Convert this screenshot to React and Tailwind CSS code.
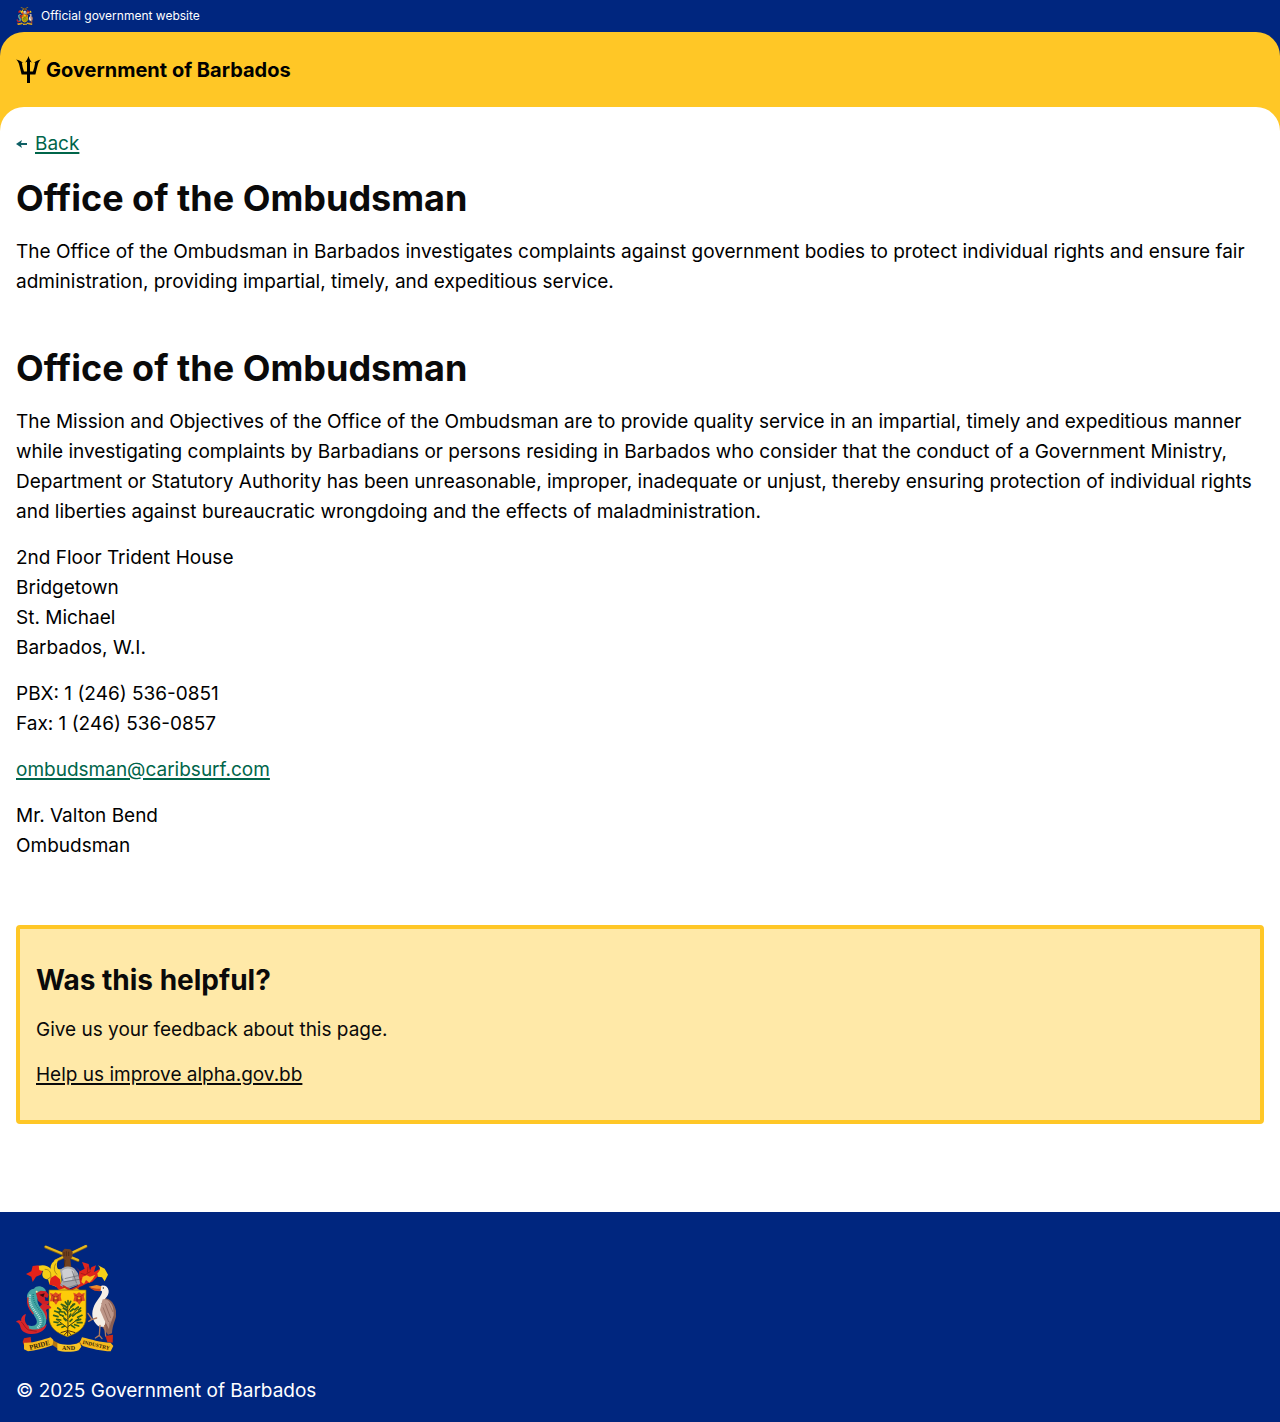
import React from "react";

function CoatOfArms({ className }) {
  return (
    <svg className={className} viewBox="18 24 300 324" role="img" aria-label="Coat of arms of Barbados">
      {/* crossed sugar canes held by a fist */}
      <g strokeLinecap="round" fill="none">
        <path d="M107 33L204 73" stroke="#8a6412" strokeWidth="9" />
        <path d="M228 31L136 75" stroke="#8a6412" strokeWidth="9" />
        <path d="M107 32L204 72" stroke="#e5b81f" strokeWidth="6" />
        <path d="M228 30L136 74" stroke="#e5b81f" strokeWidth="6" />
      </g>
      <path d="M157 46L164 38L181 40L188 48L187 62L181 70L184 94L162 94L163 70L157 60Z" fill="#70401f" />
      <path d="M162 48V60M169 46V61M176 47V60M165 72L163 90" stroke="#3c200f" strokeWidth="2" fill="none" />

      {/* mantling, left */}
      <path d="M152 98C142 104 137 92 144 72C132 72 120 84 122 98C112 86 92 84 76 94L84 106L100 104C92 118 100 130 114 130L118 144L142 154L156 150Z" fill="#f7cf17" />
      <path d="M86 88L68 90L64 106L48 114L64 122L68 138L78 122L92 116L98 106L88 102Z" fill="#e32219" />
      <path d="M122 126L136 118L150 130L154 150L168 158L154 170L136 150L118 146Z" fill="#e32219" />
      <path d="M104 100C116 100 124 106 122 122M138 82C130 94 132 108 142 116M112 130L124 122" stroke="#8d6a12" strokeWidth="2" fill="none" />
      {/* mantling, right */}
      <path d="M196 92L208 106L206 124L194 128L206 142L200 156L216 150L232 142L246 138L262 122L280 112L268 100L252 108L258 88L244 94L240 104L236 84L216 78L224 98L210 106Z" fill="#df251c" />
      <path d="M262 112C272 102 272 96 264 88L284 98L294 116L284 136L276 124L264 122Z" fill="#f7cf17" />
      <path d="M218 122L230 118L240 122L256 116L248 130L238 140L228 132L222 144L214 138Z" fill="#f7b91a" />
      <path d="M212 112L226 116L242 106M202 134L214 128M234 92L232 110" stroke="#8a1712" strokeWidth="2" fill="none" />

      {/* helmet */}
      <path d="M150 104C156 92 180 86 194 98L204 112L211 144L190 152L172 160L150 148L158 132Z" fill="#a9a9ad" />
      <path d="M156 105C168 94 184 96 192 106L186 132L162 136Z" fill="#cfcfd3" />
      <path d="M164 128L208 118M160 138L208 130M186 104L200 142M154 146L170 156L204 145" stroke="#66666c" strokeWidth="2" fill="none" />
      <path d="M160 147L182 160L204 149L208 156L184 168L158 156Z" fill="#cf2a1d" />
      <path d="M145 162L164 156L180 166L199 157L209 162L180 176Z" fill="#f2c51b" />

      {/* shield */}
      <path d="M117 162H228V244C228 274 204 292 172 302C140 292 117 274 117 244Z" fill="#fdcb09" stroke="#8b6a0b" strokeWidth="2" />
      <g fill="#dd4a20">
        <path d="M120 170L130 174L137 169L145 174L154 170L152 182L155 194L145 195L138 206L130 196L120 196L123 183Z" />
        <path d="M190 170L200 174L207 169L215 174L224 170L222 182L225 194L215 195L208 206L200 196L190 196L193 183Z" />
      </g>
      <g fill="none" stroke="#8a220f" strokeWidth="2">
        <path d="M126 178L137 184L148 178M129 192L145 192M131 184V198M144 184V196" />
        <path d="M196 178L207 184L218 178M199 192L215 192M201 184V198M214 184V196" />
      </g>
      <circle cx="137" cy="187" r="3" fill="#f6c71b" />
      <circle cx="207" cy="187" r="3" fill="#f6c71b" />
      {/* bearded fig tree */}
      <path d="M174 202C171 228 176 260 173 288M173 276L142 252M174 272L208 246M173 254L142 228M174 248L204 218M174 230L156 208M175 226L190 202" stroke="#3c3a16" strokeWidth="3" fill="none" />
      <path d="M173 284L152 290M173 286L162 298M174 286L184 298M175 284L196 290M173 282V300" stroke="#4a2b10" strokeWidth="3" fill="none" />
      <g stroke="#2f5f1c" strokeWidth="5" strokeLinecap="round" fill="none">
        <path d="M166 198L172 206M182 196L177 206M154 205L166 211M194 204L183 213M160 217L170 222M190 219L181 226M143 216L152 222M205 213L194 221M174 194V200" />
        <path d="M134 225L148 230M212 224L200 231M150 236L160 240M198 232L188 240M131 238L144 242M216 238L203 244M140 250L152 252M212 250L198 254M162 228L168 236M182 234L178 242" />
        <path d="M132 258L144 260M216 260L202 260M142 268L154 264M206 270L194 266M162 248L168 254M186 250L180 256M156 274L164 270M194 275L184 268M168 216L172 212M148 226L158 228M206 222L212 216" />
      </g>

      {/* dolphin */}
      <path d="M104 196C108 208 122 208 124 216C116 220 110 216 108 224C114 232 110 244 112 252L98 240L88 214Z" fill="#d5242a" />
      <path d="M52 192C46 172 62 158 72 158C82 144 106 152 108 166L100 176L86 182C78 192 84 206 94 218C110 236 114 258 102 274C90 290 64 290 48 282L54 268C74 274 86 264 78 248C70 232 54 216 52 192Z" fill="#45a5a4" />
      <path d="M60 176C56 200 66 214 80 232C94 250 96 264 82 276" stroke="#b5dfda" strokeWidth="7" strokeDasharray="3 3" fill="none" />
      <path d="M70 174C68 196 80 210 92 226C104 244 104 262 92 276" stroke="#1f7f86" strokeWidth="5" strokeDasharray="3 3" fill="none" />
      <path d="M78 172L92 164L108 166L116 176L112 186L104 182L106 194L118 196L114 204L96 204L84 194Z" fill="#cd1f26" />
      <path d="M88 176L104 172L100 184Z" fill="#3a0d12" />
      <circle cx="80" cy="167" r="3" fill="#f4e2a0" />
      <path d="M54 184C50 202 58 220 70 234" stroke="#d5242a" strokeWidth="4" fill="none" />
      <path d="M56 270C44 262 42 250 48 234C36 238 32 248 34 256C28 250 22 252 18 258C28 260 30 268 32 276C38 292 62 298 82 292C98 286 108 278 110 264C96 280 76 284 58 278Z" fill="#d5242a" />
      <path d="M34 258C42 264 44 276 56 282L80 286" stroke="#811519" strokeWidth="2" fill="none" />

      {/* pelican */}
      <path d="M274 188C300 180 318 206 319 234C319 250 308 262 306 292L294 296L276 272L256 244L262 206Z" fill="#8c5f53" />
      <path d="M268 154C276 144 294 148 296 164C298 182 278 190 274 204L286 204C298 218 288 244 284 272L268 272C250 262 242 238 250 216C256 196 278 178 276 166L268 162Z" fill="#f5eee6" />
      <path d="M278 190C302 188 313 212 311 238L302 262L297 280L282 250L270 222Z" fill="#bd9688" />
      <path d="M286 204L302 246M296 200L309 228M279 214L296 258M300 256L298 286" stroke="#8a6055" strokeWidth="2" fill="none" />
      <path d="M236 152L260 147L274 151L272 164L252 160Z" fill="#ef8a2c" />
      <path d="M236 154L260 158L272 158L270 166L254 164Z" fill="#c9451f" />
      <circle cx="280" cy="156" r="2" fill="#181818" />
      <path d="M260 246L246 250L234 232M246 250L236 256M246 250L240 240M270 268L268 298L256 306M268 298L276 308M284 268L287 300L296 308" stroke="#b07a5c" strokeWidth="4" fill="none" strokeLinecap="round" strokeLinejoin="round" />

      {/* scroll */}
      <path d="M42 307L62 303L64 320L50 324L42 328L38 318Z" fill="#c92c19" />
      <path d="M286 300L309 296L308 320L292 318Z" fill="#c92c19" />
      <path d="M126 312L146 322V340L128 328ZM218 312L202 322V336L216 326Z" fill="#b37510" />
      <path d="M42 320C72 322 96 312 122 304L130 312L128 328C100 338 76 344 54 346L42 340Z" fill="#f6b91d" />
      <path d="M216 304C244 310 270 320 302 320L310 330L302 346C276 346 244 338 218 330L210 318Z" fill="#f6b91d" />
      <path d="M142 322C162 328 186 328 208 320L214 332L206 343C188 349 160 349 142 343Z" fill="#f8c626" />
      <g fill="#2f2108" fontFamily="Liberation Serif, serif" fontWeight="700">
        <text x="60" y="341" fontSize="20" transform="rotate(-14 60 341)">PRIDE</text>
        <text x="156" y="343" fontSize="18">AND</text>
        <text x="217" y="323" fontSize="16" transform="rotate(13 217 323)">INDUSTRY</text>
      </g>
    </svg>
  );
}

function Trident() {
  return (
    <svg className="h-[27px] w-[25px] shrink-0" viewBox="0 0 25 27" fill="#000" aria-hidden="true">
      <path d="M12.5 0C13.1 2.2 14.2 4.4 15.8 6.4L14 5.8V15.6H17C18 12.6 18.8 9.6 19.2 6.4L17.6 6.9C19.8 5.3 22.4 4.2 25 3.6C23.1 5 22.3 6.8 21.8 8.8L19.4 18.5H14V27H11V18.5H5.6L3.2 8.8C2.7 6.8 1.9 5 0 3.6C2.6 4.2 5.2 5.3 7.4 6.9L5.8 6.4C6.2 9.6 7 12.6 8 15.6H11V5.8L9.2 6.4C10.8 4.4 11.9 2.2 12.5 0Z" />
    </svg>
  );
}

function BackArrow() {
  return (
    <svg className="h-[8px] w-[11px] shrink-0" viewBox="0 0 11 8" fill="#0e5f64" aria-hidden="true">
      <path d="M0 4L6 0L5 3H11V5H5L6 8Z" />
    </svg>
  );
}

const linkClass = "underline decoration-2 underline-offset-2";
const titleClass = "text-4xl leading-[46px] font-bold text-[#0a0a0a]";

export default function App() {
  return (
    <div className="bg-white font-['Inter',sans-serif] text-[19px] leading-[30px] text-black">
      <div className="bg-[#00267f]">
        <div className="flex h-8 items-center gap-2 px-4 text-xs text-white">
          <CoatOfArms className="h-[18px] w-[17px]" />
          <span>Official government website</span>
        </div>
        <div className="rounded-t-3xl bg-[#ffc726]">
          <header className="flex h-[75px] items-center gap-[5px] px-4">
            <Trident />
            <span className="text-xl leading-7 font-bold">Government of Barbados</span>
          </header>
          <main className="rounded-t-3xl bg-white px-4 pt-[22px] pb-22">
            <a href="#back" className="flex w-fit items-center gap-2 text-[#00654a]">
              <BackArrow />
              <span className={linkClass}>Back</span>
            </a>

            <h1 className={`mt-4 ${titleClass}`}>Office of the Ombudsman</h1>
            <p className="mt-4">
              The Office of the Ombudsman in Barbados investigates complaints against government bodies to protect
              individual rights and ensure fair administration, providing impartial, timely, and expeditious service.
            </p>

            <h1 className={`mt-12 ${titleClass}`}>Office of the Ombudsman</h1>
            <div className="mt-4 flex flex-col gap-4">
              <p>
                The Mission and Objectives of the Office of the Ombudsman are to provide quality service in an
                impartial, timely and expeditious manner while investigating complaints by Barbadians or persons
                residing in Barbados who consider that the conduct of a Government Ministry, Department or Statutory
                Authority has been unreasonable, improper, inadequate or unjust, thereby ensuring protection of
                individual rights and liberties against bureaucratic wrongdoing and the effects of maladministration.
              </p>
              <p>
                2nd Floor Trident House
                <br />
                Bridgetown
                <br />
                St. Michael
                <br />
                Barbados, W.I.
              </p>
              <p>
                PBX: 1 (246) 536-0851
                <br />
                Fax: 1 (246) 536-0857
              </p>
              <p>
                <a href="mailto:ombudsman@caribsurf.com" className={`text-[#00654a] ${linkClass}`}>
                  ombudsman@caribsurf.com
                </a>
              </p>
              <p>
                Mr. Valton Bend
                <br />
                Ombudsman
              </p>
            </div>

            <section className="mt-16 rounded-sm border-4 border-[#ffc726] bg-[#ffe9a8] px-4 pt-8 pb-[30px] text-[#0a0a0a]">
              <h2 className="text-[28px] leading-[38px] font-bold">Was this helpful?</h2>
              <p className="mt-4">Give us your feedback about this page.</p>
              <p className="mt-[15px]">
                <a href="#feedback" className={linkClass}>
                  Help us improve alpha.gov.bb
                </a>
              </p>
            </section>
          </main>
        </div>
      </div>

      <footer className="bg-[#00267f] px-4 pt-8 pb-4 text-white">
        <CoatOfArms className="h-[108px] w-[100px]" />
        <p className="mt-6">© 2025 Government of Barbados</p>
      </footer>
    </div>
  );
}
